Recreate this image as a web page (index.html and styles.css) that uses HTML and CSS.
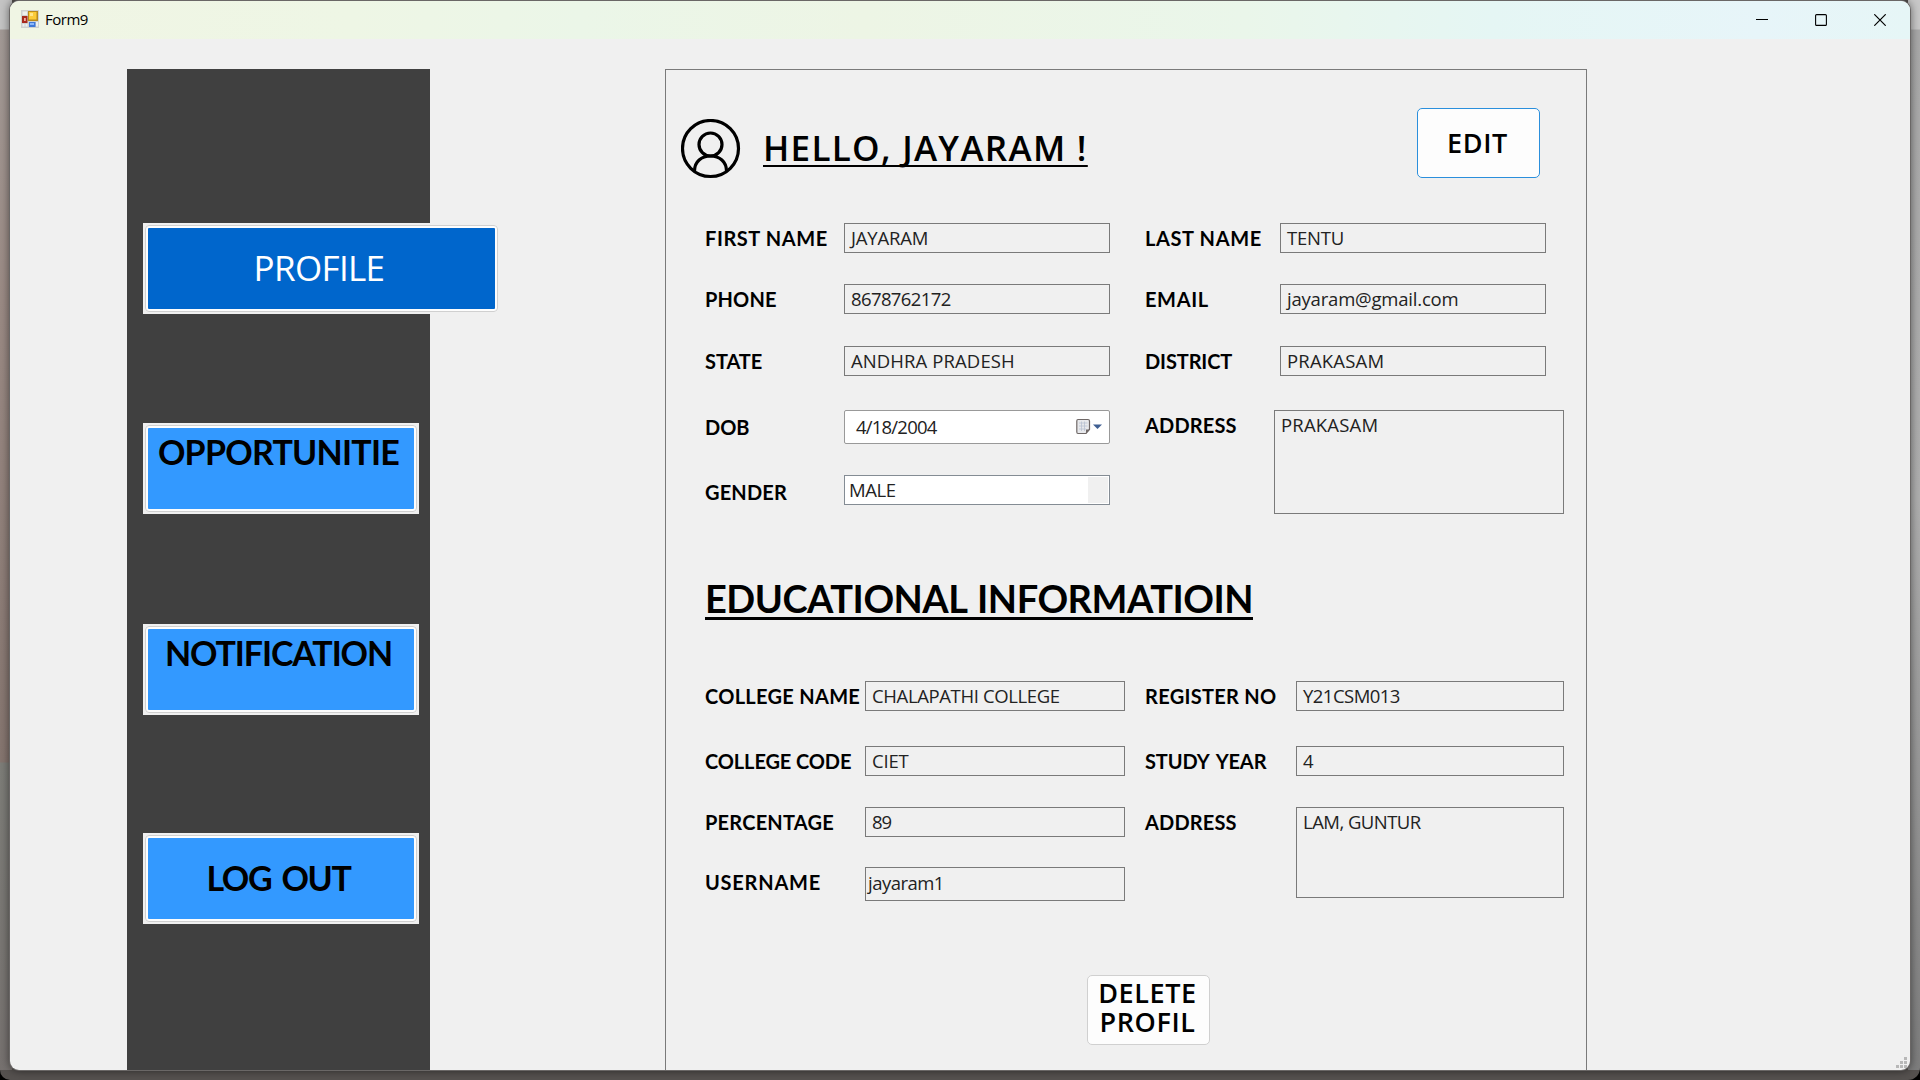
FILE: index.html
```
<!DOCTYPE html>
<html lang="en">
<head>
<meta charset="utf-8">
<title>Form9</title>
<link rel="stylesheet" href="styles.css">
</head>
<body>
<div class="desktop">
<div class="window">
  <header class="titlebar">
    <svg class="app-icon" width="18" height="18" viewBox="0 0 18 18">
      <rect width="18" height="18" fill="#cfd1cf"/>
      <rect x="1.5" y="1.5" width="4.5" height="3.5" fill="#eef0ee"/>
      <rect x="1.5" y="14" width="2" height="2.5" fill="#eef0ee"/><rect x="4.5" y="14" width="2" height="2.5" fill="#eef0ee"/>
      <rect x="15" y="12" width="2" height="4.5" fill="#eef0ee"/>
      <rect x="7" y="1" width="10" height="10" fill="#b98a1c"/>
      <rect x="8" y="2" width="7.5" height="7.5" fill="#fccb38"/>
      <rect x="9" y="3" width="3" height="3" fill="#ffe68a"/>
      <rect x="1" y="6" width="5.5" height="7" fill="#a8281c"/>
      <rect x="3" y="8" width="1.8" height="3" fill="#f0b0a0"/>
      <rect x="8" y="12" width="6.5" height="5" fill="#3f78d8"/>
      <rect x="9" y="13" width="4" height="2" fill="#8db8f8"/>
    </svg>
    <span class="caption">Form9</span>
    <div class="window-controls">
      <svg width="12" height="12" viewBox="0 0 12 12"><path d="M0 5.5H12" stroke="#000" fill="none"/></svg>
      <svg width="12" height="12" viewBox="0 0 12 12"><rect x=".6" y=".6" width="10.8" height="10.8" rx="1" stroke="#000" stroke-width="1.1" fill="none"/></svg>
      <svg width="12" height="12" viewBox="0 0 12 12"><path d="M.3 .3L11.7 11.7M11.7 .3L.3 11.7" stroke="#000" stroke-width="1.2" fill="none"/></svg>
    </div>
  </header>
  <main class="client">
    <nav class="sidebar">
      <div class="nav-button active"><span>PROFILE</span></div>
      <div class="nav-button opportunities"><span>OPPORTUNITIE</span></div>
      <div class="nav-button notifications"><span>NOTIFICATION</span></div>
      <div class="nav-button logout"><span>LOG OUT</span></div>
    </nav>
    <section class="panel">
      <div class="panel-header">
        <svg class="avatar" width="60" height="60" viewBox="0 0 60 60" fill="none" stroke="#000" stroke-width="3.2">
          <circle cx="29.500" cy="29.500" r="28"/><circle cx="29.500" cy="25.500" r="11.500"/>
          <path d="M13.500 52C13.500 42.500 20.500 37 29.500 37S45.500 42.500 45.500 52"/>
        </svg>
        <h1>HELLO, JAYARAM !</h1>
        <button class="edit">EDIT</button>
      </div>
      <div class="fields personal">
        <label class="track-57">FIRST NAME</label><div class="box track-n19">JAYARAM</div>
        <label class="track-62">LAST NAME</label><div class="box track-n22">TENTU</div>
        <label class="track-16">PHONE</label><div class="box track-n61">8678762172</div>
        <label class="track-62">EMAIL</label><div class="box track-n25">jayaram@gmail.com</div>
        <label class="track-0">STATE</label><div class="box track-15">ANDHRA PRADESH</div>
        <label class="track-n12">DISTRICT</label><div class="box track-31">PRAKASAM</div>
        <label class="dob-label">DOB</label>
        <div class="box date track-n79"><span>4/18/2004</span>
          <svg width="28" height="18" viewBox="0 0 28 18">
            <path d="M2 1.500H12Q13.500 1.500 13.500 3V11.500L10 15.500H2Q.8 15.500 .8 14V3Q.8 1.500 2 1.500Z" fill="#e8e9ec" stroke="#6f6867" stroke-width="1.200"/>
            <path d="M3 5H11.500M3 8H11.500M3 11H10M5.500 3.500V13M8.500 3.500V13" stroke="#b9c2d2" stroke-width=".8"/>
            <path d="M13.500 11.500H10V15.500Z" fill="#6f6867"/>
            <path d="M17 6.500H26L21.500 11Z" fill="#3f5f92"/>
          </svg>
        </div>
        <label class="track-16">ADDRESS</label><div class="box area home-address track-31">PRAKASAM</div>
        <label class="gender-label track-16">GENDER</label>
        <div class="box combo track-n43"><span>MALE</span><i class="drop"></i></div>
      </div>
      <h2>EDUCATIONAL INFORMATIOIN</h2>
      <div class="fields education">
        <label class="track-29">COLLEGE NAME</label><div class="box track-n37">CHALAPATHI COLLEGE</div>
        <label class="track-29">REGISTER NO</label><div class="box track-n55">Y21CSM013</div>
        <label class="track-n12">COLLEGE CODE</label><div class="box track-n19">CIET</div>
        <label class="study-year track-n12">STUDY YEAR</label><div class="box">4</div>
        <label class="track-22">PERCENTAGE</label><div class="box track-n100">89</div>
        <label class="track-16">ADDRESS</label><div class="box area track-n55">LAM, GUNTUR</div>
        <label class="track-76">USERNAME</label><div class="box username track-n55">jayaram1</div>
      </div>
      <button class="delete">DELETE<br>PROFIL</button>
    </section>
    <svg class="grip" width="12" height="12" viewBox="0 0 12 12" fill="#b8b8b8">
      <path d="M8 0h3v3h-3zM4 4h3v3h-3zM8 4h3v3h-3zM0 8h3v3h-3zM4 8h3v3h-3zM8 8h3v3h-3z"/>
    </svg>
  </main>
</div>
</div>
</body>
</html>
```
FILE: styles.css
```
* { box-sizing: border-box; }
html { background: #000; }
body { margin: 0; width: 1920px; height: 1080px; overflow: hidden; color: #000; }

.desktop {
  width: 1920px;
  height: 1080px;
  padding: 1px 10px 10px;
  border-radius: 0 0 12px 10px;
  background:
    linear-gradient(#c4c4c4 0 29px, #a39a96 30px, #9b8b85 300px, #85756f 762px, #7d7d78 763px, #76716f 1080px) 0 0 / 12px 1070px no-repeat,
    linear-gradient(#c8c8c8 0 29px, #a9a9a9 30px, #aeaeae 500px, #7d7d7d 1070px) 100% 0 / 12px 1070px no-repeat,
    #55514f;
}
.window {
  width: 1900px;
  height: 1069px;
  border-radius: 9px;
  overflow: hidden;
  background: #f0f0f0;
  box-shadow: 0 0 0 1px #6a6766, 0 0 9px 1px rgba(0, 0, 0, .5);
}

.titlebar {
  display: flex;
  align-items: center;
  height: 38px;
  padding: 0 24px 0 11px;
  background: linear-gradient(90deg, #f0f5e4, #eef6e5 18%, #ebf6e8 30%, #edf5e5 45%, #eaf6ea 65%, #e5f6f4 78%, #e7f5f9 92%, #e6f6f6);
}
.app-icon { margin-top: -2px; }
.caption { margin: -2px 0 0 6px; font: 15px/20px "Open Sans", sans-serif; letter-spacing: -.5px; }
.window-controls { display: flex; gap: 47px; margin-left: auto; }

.client {
  position: relative;
  display: flex;
  align-items: flex-start;
  height: 1031px;
  padding: 30px 0 0 117px;
}
.sidebar {
  display: flex;
  flex-direction: column;
  width: 303px;
  height: 1001px;
  padding: 154px 0 0 16px;
  background: #404040;
}
.nav-button {
  flex: none;
  display: flex;
  justify-content: center;
  width: 276px;
  height: 91px;
  padding: 2px;
  background: #f0f0f0;
  color: #000;
  font: bold 34px/44px Lato, sans-serif;
}
.nav-button span {
  flex: 1;
  padding: 2px 5px 0 0;
  border: 3px solid #fdfdfd;
  border-radius: 4px;
  outline: 1px solid #d0d0d0;
  outline-offset: -1px;
  background: #3399ff;
  text-align: center;
}
.nav-button.active {
  width: 357px;
  font: 35px/80px "Open Sans", sans-serif;
  letter-spacing: -.66px;
  color: #fff;
}
.nav-button.active span { padding: 0 5px 0 0; background: #0066cc; }
.opportunities { margin-top: 109px; letter-spacing: -.75px; }
.notifications { margin-top: 110px; letter-spacing: -1.12px; }
.logout { margin-top: 118px; letter-spacing: -1.3px; word-spacing: 3px; }
.nav-button.logout span { padding-top: 0; line-height: 80px; }

.panel {
  width: 922px;
  height: 1010px;
  margin-left: 235px;
  padding-left: 15px;
  border: 1px solid #7a7a7a;
}
.panel-header { display: flex; margin-top: 38px; height: 71px; }
.avatar { flex: none; margin: 11px 0 0; }
h1 {
  flex: none;
  margin: 17px 0 0 22px;
  width: 328px;
  font: 600 35px/46px "Open Sans", sans-serif;
  letter-spacing: 1.3px;
  text-decoration: underline 1.5px;
  text-underline-offset: 4px;
  text-decoration-skip-ink: none;
  white-space: nowrap;
}
button {
  display: block;
  padding: 0;
  border: 1px solid #d0d0d0;
  border-radius: 5px;
  background: #fdfdfd;
  color: #000;
  font: 600 27px/29px "Open Sans", sans-serif;
  letter-spacing: .6px;
}
.edit { flex: none; width: 123px; height: 70px; margin: 0 0 0 326px; padding: 0 2px 2px 0; border: 1.5px solid #2b8fdc; }
.delete { width: 123px; height: 70px; margin: 74px 0 0 406px; padding: 0 2px 6px 0; }

.fields { display: grid; align-items: start; margin-left: 24px; }
.personal { grid-template: 61px 62px 64px 65px 39px / 139px 301px 135px 1fr; margin-top: 44px; }
.education { grid-template: 65px 61px 60px 34px / 160px 280px 151px 1fr; margin-top: 59px; }
label { font: bold 20px/30px Lato, sans-serif; white-space: nowrap; }
.dob-label { padding-top: 2px; }
.gender-label { padding-top: 2px; }
.study-year { word-spacing: 3px; }
.box {
  height: 30px;
  width: 266px;
  padding-left: 6px;
  border: 1px solid #7a7a7a;
  color: #222;
  font: 18.5px/28px "Open Sans", sans-serif;
  white-space: nowrap;
}
.area { height: 104px; }
.home-address { width: 290px; margin-left: -6px; grid-row: 4 / 6; grid-column: 4; }
.date {
  display: flex;
  justify-content: space-between;
  align-items: center;
  height: 34px;
  padding: 0 5px 0 11px;
  background: #fff;
  border-color: #999;
  border-radius: 2px;
}
.combo {
  display: flex;
  justify-content: space-between;
  padding: 1px 1px 1px 4px;
  line-height: 26px;
  background: #fff;
  border-color: #848c94;
}
.drop { width: 20px; background: #f0f0f0; }
.education .box { width: 260px; }
.education .box:nth-child(4n) { width: 268px; }
.education .area { width: 268px; height: 91px; grid-row: 3 / 5; grid-column: 4; }
.education .username { width: 260px; height: 34px; padding-left: 2px; line-height: 30px; }

h2 {
  margin: 60px 0 0 24px;
  font: bold 38px/48px Lato, sans-serif;
  letter-spacing: -.5px;
  word-spacing: 2px;
  text-decoration: underline 2.5px;
  text-underline-offset: 4px;
  text-decoration-skip-ink: none;
  white-space: nowrap;
}

.track-n100 { letter-spacing: -1px; }
.track-n79 { letter-spacing: -.79px; }
.track-n61 { letter-spacing: -.61px; }
.track-n55 { letter-spacing: -.53px; }
.track-n43 { letter-spacing: -.43px; }
.track-n37 { letter-spacing: -.37px; }
.track-n25 { letter-spacing: -.2px; }
.track-n22 { letter-spacing: -.22px; }
.track-n19 { letter-spacing: -.19px; }
.track-n12 { letter-spacing: -.12px; }
.track-0 { letter-spacing: -.08px; }
.track-15 { letter-spacing: .1px; }
.track-16 { letter-spacing: .16px; }
.track-22 { letter-spacing: .22px; }
.track-29 { letter-spacing: .29px; }
.track-31 { letter-spacing: .2px; }
.track-57 { letter-spacing: .57px; }
.track-62 { letter-spacing: .62px; }
.track-76 { letter-spacing: .76px; }

.grip { position: absolute; right: 2px; bottom: 1px; }
```
